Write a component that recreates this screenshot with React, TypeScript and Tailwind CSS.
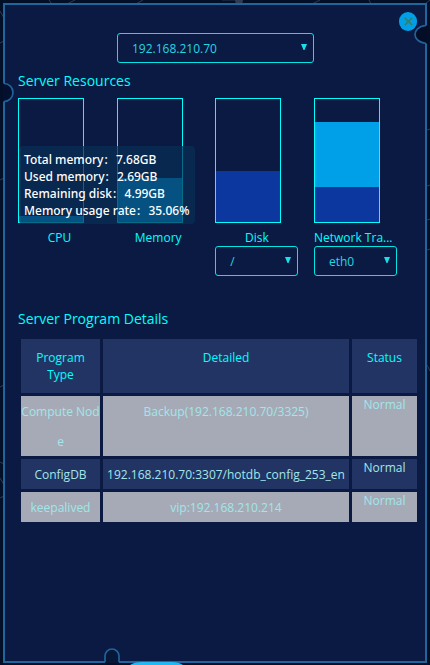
import React from 'react';

const bars = [
  { name: 'CPU', fills: ['h-[6px] bg-[#00a0e9]'] },
  { name: 'Memory', fills: ['h-[44px] bg-[#00a0e9]'] },
  { name: 'Disk', fills: ['h-[51px] bg-[#0c379e]'], select: '/' },
  { name: 'Network Tra...', fills: ['h-[65px] bg-[#00a0e9]', 'h-[35px] bg-[#0c379e]'], select: 'eth0', left: true },
];

const rows = [
  { type: ['Compute Nod', 'e'], detail: 'Backup(192.168.210.70/3325)', light: true },
  { type: ['ConfigDB'], detail: '192.168.210.70:3307/hotdb_config_253_en', light: false },
  { type: ['keepalived'], detail: 'vip:192.168.210.214', light: true },
];

const tips = [
  ['Total memory', '7.68GB'],
  ['Used memory', '2.69GB'],
  ['Remaining disk', '4.99GB'],
  ['Memory usage rate', '35.06%'],
];

function Select({ value, className }: { value: string; className: string }) {
  return (
    <div className={`flex h-[30px] items-center justify-between rounded-[3px] border border-[#00e5e5] pl-[14px] pr-[6px] text-[12px] text-[#22d6e4] ${className}`}>
      <span className="pt-px">{value}</span>
      <svg width="6" height="6" viewBox="0 0 6 6" className="mb-[2px]">
        <path d="M0 0H6L3.5 6H2.5Z" fill="#19dfed" />
      </svg>
    </div>
  );
}

function Backdrop() {
  return (
    <svg className="absolute inset-0" width="430" height="665" viewBox="0 0 430 665" fill="none">
      <g stroke="#303b53" strokeWidth="1">
        <path d="M49 0L52 4M75 0L67 4M143 0L136 4M320 0L312 4M369 0L371 4M430 0L425 4M0 11L4 18M0 43L4 41M0 180L4 178M0 387L4 385M0 462L4 464M0 478L4 485M0 498L4 496M427 130L430 129M427 186L430 185M427 220L430 219M427 250L430 249M427 365L430 371" />
      </g>
      <path d="M222 0H236" stroke="#263249" />
      <circle cx="239" cy="0" r="4" fill="#303b53" />
    </svg>
  );
}

function Notches() {
  return (
    <svg className="pointer-events-none absolute inset-0" width="430" height="665" viewBox="0 0 430 665" fill="none">
      <path d="M3 83.500H4A9 9 0 0 1 4 101.500H3Z" fill="#041030" />
      <path d="M4 83.500A9 9 0 0 1 4 101.500" stroke="#21629b" strokeWidth="1.700" />
      <path d="M427 25.500H425C417 26 415 31 415 34.500S418 42.500 425 43.500H427Z" fill="#030d25" />
      <path d="M426 25.500C418 26 415 31 415 34.500S418 42.500 426 43.500" stroke="#21629b" strokeWidth="1.700" />
      <path d="M105 663V656A7 7 0 0 1 119 656V663Z" fill="#071737" />
      <path d="M105 662V656A7 7 0 0 1 119 656V662" stroke="#21629b" strokeWidth="1.700" />
      <path d="M130 665Q134 662 142 662H172Q179 662 183 665Z" fill="#22b9f2" />
    </svg>
  );
}

export default function App() {
  return (
    <div className="relative h-[665px] w-[430px] overflow-hidden bg-[#030e27] p-[3px] font-['Open_Sans','Noto_Sans',sans-serif]">
      <Backdrop />
      <main className="relative h-[660px] w-[424px] border-2 border-[#21659d] bg-[#0b1a42]">
        <button className="absolute right-[8px] top-[7px] flex h-[19px] w-[18px] items-center justify-center rounded-full bg-[#00a0e9]">
          <svg width="9" height="9" viewBox="0 0 9 9" stroke="#32816f" strokeWidth="1.700">
            <path d="M.8.8L8.200 8.200M8.200.8L.8 8.200" />
          </svg>
        </button>
        <Select value="192.168.210.70" className="ml-[112px] mt-[28px] w-[197px]" />
        <h2 className="ml-[13px] mt-[7px] h-[28px] text-[14px] leading-[22px] text-[#00ffff]">Server Resources</h2>
        <div className="ml-[13px] flex h-[210px]">
          {bars.map((bar) => (
            <div key={bar.name} className="w-[98.67px] shrink-0">
              <div className="flex h-[125px] w-[66px] flex-col justify-end border border-[#00ffff]">
                {bar.fills.map((fill) => <div key={fill} className={fill} />)}
              </div>
              <div className={`h-[23px] w-[83px] whitespace-nowrap pt-[5px] text-[12px] leading-[20px] text-[#00ffff] ${bar.left ? 'text-left' : 'text-center'}`}>{bar.name}</div>
              {bar.select && <Select value={bar.select} className="w-[83px]" />}
            </div>
          ))}
        </div>
        <h2 className="ml-[13px] h-[28px] text-[14px] leading-[22px] text-[#00ffff]">Server Program Details</h2>
        <table className="ml-[13px] w-[402px] table-fixed border-separate border-spacing-[3px] text-center text-[12px]">
          <colgroup><col className="w-[79px]" /><col className="w-[246px]" /><col className="w-[65px]" /></colgroup>
          <thead>
            <tr className="h-[54px] align-top leading-[17px] text-[#00ffff]">
              {['Program Type', 'Detailed', 'Status'].map((h) => (
                <th key={h} className="bg-[#223464] px-[10px] pb-0 pt-[10px] font-normal">{h}</th>
              ))}
            </tr>
          </thead>
          <tbody>
            {rows.map((row) => (
              <tr key={row.detail} className={`align-top text-[#a2e6ea] ${row.light ? 'bg-[#a5aab6]' : 'bg-[#223464]'}`}>
                <td className="whitespace-nowrap p-0 leading-[30px]">{row.type.map((t) => <div key={t} className="h-[30px] pt-px">{t}</div>)}</td>
                <td className="whitespace-nowrap p-0 leading-[30px]"><div className="h-[30px] pt-px">{row.detail}</div></td>
                <td className="p-0 leading-[17px]">Normal</td>
              </tr>
            ))}
          </tbody>
        </table>
        <div className="absolute left-[14px] top-[141px] h-[78px] w-[176px] rounded-[4px] bg-[#072f56]/70 pl-[5px] pt-[5px] text-[12px] leading-[17px] text-white">
          {tips.map(([label, value]) => (
            <div key={label} className="whitespace-nowrap font-['Noto_Sans','Noto_Sans_CJK_SC',sans-serif] font-medium">{label}<span className="inline-block w-[12.500px] pl-px">:</span>{value}</div>
          ))}
        </div>
      </main>
      <Notches />
    </div>
  );
}
